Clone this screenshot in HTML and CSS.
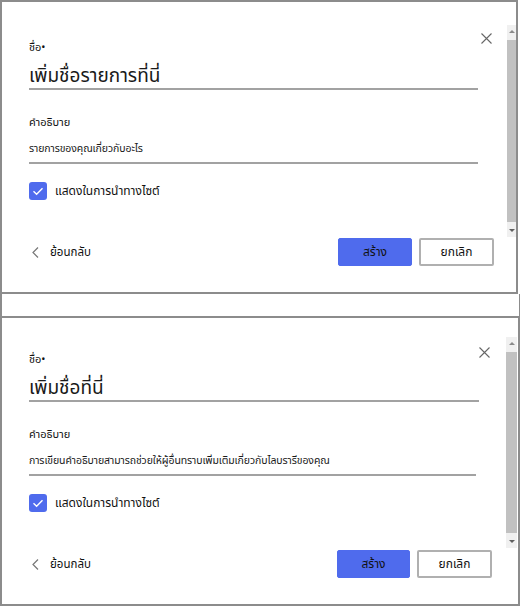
FILE: index.html
```html
<!DOCTYPE html>
<html lang="th">
<head>
<meta charset="utf-8">
<title>สร้างรายการ</title>
<link rel="stylesheet" href="styles.css">
</head>
<body>
<div class="frame">
  <section class="panel panel-a">
    <div class="dialog">
      <div class="main">
        <div class="fields">
          <div class="field">
            <div class="label">ชื่อ•</div>
            <div class="value value-lg">เพิ่มชื่อรายการที่นี่</div>
          </div>
          <div class="field field-desc">
            <div class="label">คำอธิบาย</div>
            <div class="value value-sm">รายการของคุณเกี่ยวกับอะไร</div>
          </div>
          <div class="check">
            <span class="box"><svg viewBox="0 0 18 18" width="18" height="18"><path d="M4.5 9.3 L7.6 12.2 L13.5 6.2" fill="none" stroke="#fff" stroke-width="1.4"/></svg></span>
            <span class="check-text">แสดงในการนำทางไซต์</span>
          </div>
        </div>
        <button class="close" aria-label="ปิด"><svg viewBox="0 0 11 11" width="11" height="11"><path d="M0.5 0.5 L10.5 10.5 M10.5 0.5 L0.5 10.5" stroke="#666" stroke-width="1.1" fill="none"/></svg></button>
      </div>
      <div class="footer">
        <div class="back">
          <svg viewBox="0 0 7 11" width="7" height="11"><path d="M6 0.5 L1 5.5 L6 10.5" fill="none" stroke="#777" stroke-width="1.2"/></svg>
          <span>ย้อนกลับ</span>
        </div>
        <div class="actions">
          <button class="btn btn-primary">สร้าง</button>
          <button class="btn btn-secondary">ยกเลิก</button>
        </div>
      </div>
    </div>
    <div class="scrollbar">
      <span class="arrow arrow-up"></span>
      <span class="thumb"></span>
      <span class="arrow arrow-down"></span>
    </div>
  </section>

  <div class="strip"></div>

  <section class="panel panel-b">
    <div class="dialog">
      <div class="main">
        <div class="fields">
          <div class="field">
            <div class="label">ชื่อ•</div>
            <div class="value value-lg">เพิ่มชื่อที่นี่</div>
          </div>
          <div class="field field-desc">
            <div class="label">คำอธิบาย</div>
            <div class="value value-sm short">การเขียนคำอธิบายสามารถช่วยให้ผู้อื่นทราบเพิ่มเติมเกี่ยวกับไลบรารีของคุณ</div>
          </div>
          <div class="check">
            <span class="box"><svg viewBox="0 0 18 18" width="18" height="18"><path d="M4.5 9.3 L7.6 12.2 L13.5 6.2" fill="none" stroke="#fff" stroke-width="1.4"/></svg></span>
            <span class="check-text">แสดงในการนำทางไซต์</span>
          </div>
        </div>
        <button class="close" aria-label="ปิด"><svg viewBox="0 0 11 11" width="11" height="11"><path d="M0.5 0.5 L10.5 10.5 M10.5 0.5 L0.5 10.5" stroke="#666" stroke-width="1.1" fill="none"/></svg></button>
      </div>
      <div class="footer">
        <div class="back">
          <svg viewBox="0 0 7 11" width="7" height="11"><path d="M6 0.5 L1 5.5 L6 10.5" fill="none" stroke="#777" stroke-width="1.2"/></svg>
          <span>ย้อนกลับ</span>
        </div>
        <div class="actions">
          <button class="btn btn-primary">สร้าง</button>
          <button class="btn btn-secondary">ยกเลิก</button>
        </div>
      </div>
    </div>
    <div class="scrollbar">
      <span class="arrow arrow-up"></span>
      <span class="thumb"></span>
      <span class="arrow arrow-down"></span>
    </div>
  </section>
</div>
</body>
</html>
```

FILE: styles.css
```css
* { box-sizing: border-box; }

html, body {
  margin: 0;
  padding: 0;
  background: #fff;
}

body {
  font-family: "Noto Sans Thai", Tahoma, "Loma", "Garuda", "Norasi", "Noto Sans", "DejaVu Sans", sans-serif;
  color: #111;
  width: 520px;
  height: 607px;
  overflow: hidden;
}

.frame {
  display: flex;
  flex-direction: column;
  width: 520px;
}

.panel {
  display: flex;
  background: #fff;
  border: 2px solid #8c8c8c;
}

.panel-a {
  width: 518px;
  height: 294px;
}

.panel-b {
  width: 520px;
  height: 288px;
  border-top: 0;
}

.strip {
  width: 520px;
  height: 24px;
  border-left: 2px solid #8c8c8c;
  border-right: 1px solid #8c8c8c;
  border-bottom: 2px solid #8c8c8c;
}

.dialog {
  flex: 1;
  display: flex;
  flex-direction: column;
  padding-left: 27px;
}

.panel-a .dialog { padding-top: 31px; }
.panel-b .dialog { padding-top: 27px; }

.main {
  display: flex;
  align-items: flex-start;
}

.fields {
  flex: 1;
  padding-top: 8px;
  display: flex;
  flex-direction: column;
}

.close {
  width: 11px;
  height: 11px;
  padding: 0;
  border: 0;
  background: none;
  display: block;
  margin-left: 3px;
}
.close svg { display: block; }

.panel-a .close { margin-right: 15px; }
.panel-b .close { margin-top: 2px; margin-left: 0; margin-right: 16px; }

.label {
  font-size: 11px;
  line-height: 14px;
  color: #111;
}

.value {
  border-bottom: 2px solid #a2a2a2;
  color: #1a1a1a;
  white-space: nowrap;
}

.value-lg {
  margin-top: 10px;
  font-size: 19px;
  line-height: 23px;
}

.field-desc { margin-top: 26px; }

.value-sm {
  margin-top: 10px;
  font-size: 10.5px;
  letter-spacing: -0.1px;
  line-height: 18px;
  padding-bottom: 4px;
}

.value-sm.short { margin-right: 3px; }

.check {
  margin-top: 18px;
  display: flex;
  align-items: center;
  gap: 8px;
  font-size: 12px;
}

.box {
  width: 18px;
  height: 18px;
  border-radius: 3px;
  background: #4f6bed;
  display: block;
}
.box svg { display: block; }

.footer {
  margin-top: 38px;
  display: flex;
  align-items: center;
  justify-content: space-between;
}

.panel-a .footer { padding-right: 13px; }
.panel-b .footer { padding-right: 14px; }

.back {
  display: flex;
  align-items: center;
  gap: 11px;
  padding-left: 3px;
  font-size: 11.5px;
  color: #111;
}
.back svg { display: block; }

.actions {
  display: flex;
  gap: 7px;
}

.btn {
  height: 28px;
  font-family: inherit;
  font-size: 12px;
  color: #111;
  border-radius: 2px;
  padding: 0;
  display: flex;
  align-items: center;
  justify-content: center;
}

.btn-primary {
  width: 74px;
  background: #4f6bed;
  border: 1px solid #4f6bed;
  color: #111;
}

.panel-b .btn-primary { width: 73px; }

.btn-secondary {
  width: 75px;
  background: #fff;
  border: 2px solid #b0b0b0;
}

.scrollbar {
  width: 9px;
  background: #f0f0f0;
  display: flex;
  flex-direction: column;
  align-items: center;
}

.panel-a .scrollbar { margin-top: 23px; height: 212px; }
.panel-b .scrollbar { margin-top: 19px; height: 211px; width: 11px; margin-right: 1px; }

.thumb {
  flex: 1;
  width: 100%;
  background: #c1c1c1;
  margin: 2px 0;
}

.arrow {
  width: 0;
  height: 0;
  border-left: 3px solid transparent;
  border-right: 3px solid transparent;
  margin: 5px 0;
}

.arrow-up { border-bottom: 3px solid #8a8a8a; }
.arrow-down { border-top: 3px solid #606060; }
```
